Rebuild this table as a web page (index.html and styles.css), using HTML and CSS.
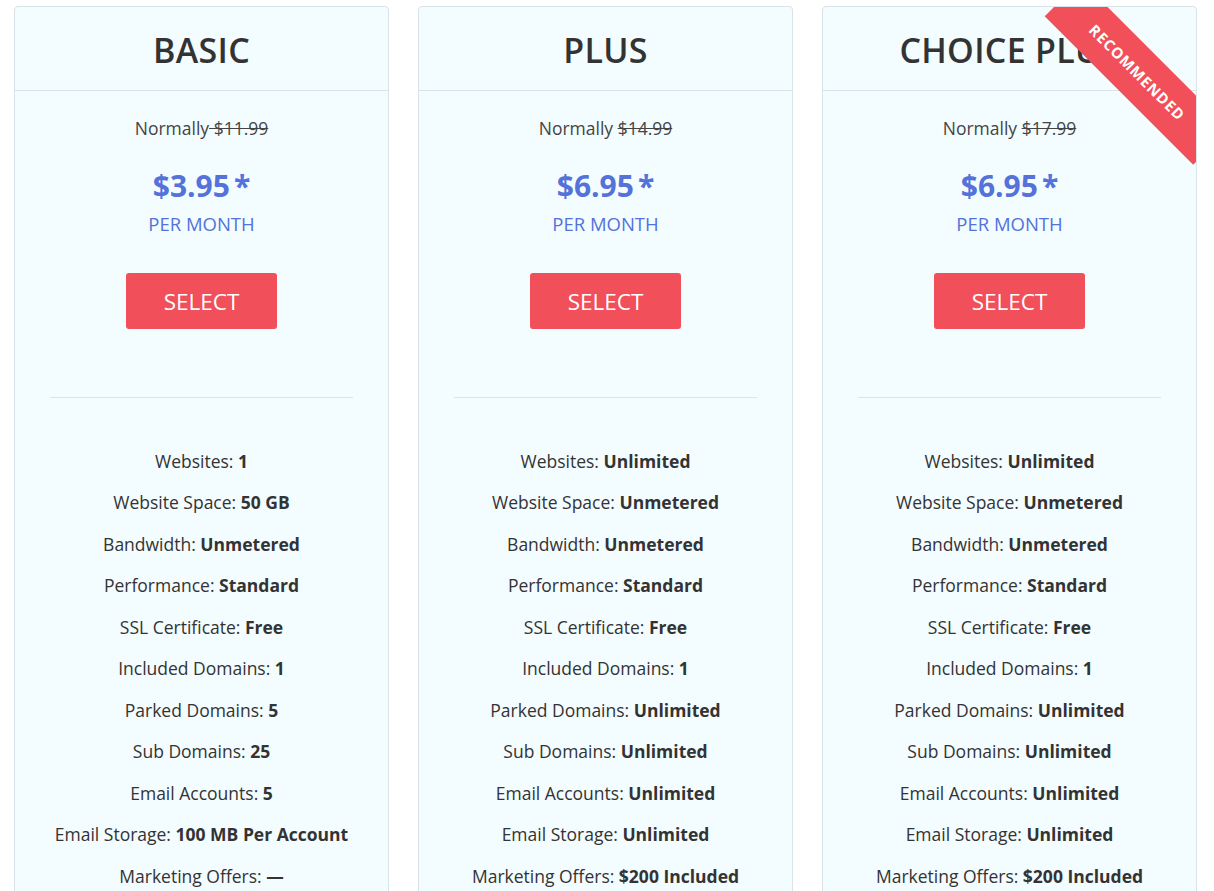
FILE: index.html
```html
<!DOCTYPE html>
<html>
<head>
<meta charset="utf-8">
<link rel="stylesheet" href="styles.css">
</head>
<body>
<div class="plans">
  <div class="card">
    <div class="card-head"><h2 class="title">BASIC</h2></div>
    <div class="card-body">
      <p class="normally">Normally<s> $11.99</s></p>
      <p class="price">$3.95<span class="ast">*</span></p>
      <p class="per">PER MONTH</p>
      <a class="btn">SELECT</a>
      <hr class="divider">
      <ul class="features">
        <li>Websites: <b>1</b></li>
        <li>Website Space: <b>50 GB</b></li>
        <li>Bandwidth: <b>Unmetered</b></li>
        <li>Performance: <b>Standard</b></li>
        <li>SSL Certificate: <b>Free</b></li>
        <li>Included Domains: <b>1</b></li>
        <li>Parked Domains: <b>5</b></li>
        <li>Sub Domains: <b>25</b></li>
        <li>Email Accounts: <b>5</b></li>
        <li>Email Storage: <b>100 MB Per Account</b></li>
        <li>Marketing Offers: <b>—</b></li>
      </ul>
    </div>
  </div>
  <div class="card">
    <div class="card-head"><h2 class="title">PLUS</h2></div>
    <div class="card-body">
      <p class="normally">Normally <s>$14.99</s></p>
      <p class="price">$6.95<span class="ast">*</span></p>
      <p class="per">PER MONTH</p>
      <a class="btn">SELECT</a>
      <hr class="divider">
      <ul class="features">
        <li>Websites: <b>Unlimited</b></li>
        <li>Website Space: <b>Unmetered</b></li>
        <li>Bandwidth: <b>Unmetered</b></li>
        <li>Performance: <b>Standard</b></li>
        <li>SSL Certificate: <b>Free</b></li>
        <li>Included Domains: <b>1</b></li>
        <li>Parked Domains: <b>Unlimited</b></li>
        <li>Sub Domains: <b>Unlimited</b></li>
        <li>Email Accounts: <b>Unlimited</b></li>
        <li>Email Storage: <b>Unlimited</b></li>
        <li>Marketing Offers: <b>$200 Included</b></li>
      </ul>
    </div>
  </div>
  <div class="card">
    <div class="ribbon">RECOMMENDED</div>
    <div class="card-head"><h2 class="title">CHOICE PLUS</h2></div>
    <div class="card-body">
      <p class="normally">Normally <s>$17.99</s></p>
      <p class="price">$6.95<span class="ast">*</span></p>
      <p class="per">PER MONTH</p>
      <a class="btn">SELECT</a>
      <hr class="divider">
      <ul class="features">
        <li>Websites: <b>Unlimited</b></li>
        <li>Website Space: <b>Unmetered</b></li>
        <li>Bandwidth: <b>Unmetered</b></li>
        <li>Performance: <b>Standard</b></li>
        <li>SSL Certificate: <b>Free</b></li>
        <li>Included Domains: <b>1</b></li>
        <li>Parked Domains: <b>Unlimited</b></li>
        <li>Sub Domains: <b>Unlimited</b></li>
        <li>Email Accounts: <b>Unlimited</b></li>
        <li>Email Storage: <b>Unlimited</b></li>
        <li>Marketing Offers: <b>$200 Included</b></li>
      </ul>
    </div>
  </div>
</div>
</body>
</html>
```
FILE: styles.css
```css
* { box-sizing: border-box; }
html, body { margin: 0; padding: 0; background: #fff; }
body {
  font-family: "Open Sans", "Liberation Sans", sans-serif;
  color: #333;
  overflow: hidden;
  height: 891px;
}
.plans {
  display: grid;
  grid-template-columns: 375px 375px 375px;
  gap: 29px;
  padding: 6px 0 0 14px;
}
.card {
  position: relative;
  overflow: hidden;
  background: #f3fcff;
  border: 1px solid #d9e3e8;
  border-radius: 4px;
  height: 1000px;
}
.card-head {
  height: 84px;
  border-bottom: 1px solid #d9e3e8;
  display: flex;
  align-items: center;
  justify-content: center;
}
.title {
  margin: 0;
  font-size: 34px;
  font-weight: 600;
  letter-spacing: 0.3px;
  color: #333;
  line-height: 1;
  padding-top: 2px;
}
.card-body {
  text-align: center;
  padding-top: 25px;
}
.normally {
  margin: 0;
  font-size: 17.5px;
  line-height: 24px;
  color: #444;
}
.normally s { text-decoration: line-through; }
.price {
  margin: 28px 0 0;
  font-size: 30px;
  line-height: 36px;
  font-weight: 700;
  color: #5472d9;
}
.ast { margin-left: 4px; }
.per {
  margin: 8px 0 0;
  font-size: 18.5px;
  line-height: 24px;
  color: #5472d9;
}
.btn {
  display: inline-flex;
  align-items: center;
  justify-content: center;
  margin-top: 37px;
  width: 151px;
  height: 56px;
  background: #f14f59;
  color: #fff;
  font-size: 22.5px;
  border-radius: 3px;
}
.divider {
  margin: 68px 35px 0;
  border: 0;
  border-top: 1px solid #dbe4e8;
  height: 0;
}
.features {
  list-style: none;
  margin: 42.5px 0 0;
  padding: 0;
}
.features li {
  font-size: 17.5px;
  line-height: 41.5px;
  color: #333;
}
.features b { font-weight: 700; }
.ribbon {
  position: absolute;
  left: 209px;
  top: 40px;
  width: 210px;
  height: 51px;
  line-height: 51px;
  transform: rotate(45deg);
  background: #f14f59;
  color: #fff;
  font-size: 15px;
  font-weight: 700;
  letter-spacing: 0.8px;
  text-align: center;
  z-index: 2;
}
```
